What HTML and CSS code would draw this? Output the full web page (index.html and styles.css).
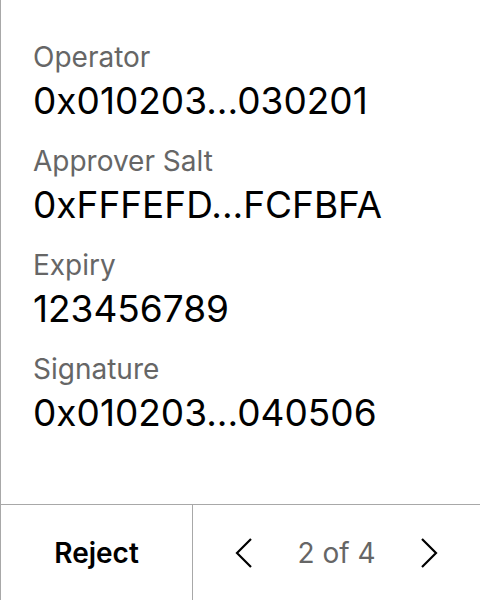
FILE: index.html
```html
<!DOCTYPE html>
<html>
<head>
<meta charset="utf-8">
<link rel="stylesheet" href="styles.css">
</head>
<body>
<div class="panel">
  <div class="fields">
    <div class="field">
      <div class="label">Operator</div>
      <div class="value">0x010203...030201</div>
    </div>
    <div class="field">
      <div class="label">Approver Salt</div>
      <div class="value">0xFFFEFD...FCFBFA</div>
    </div>
    <div class="field">
      <div class="label">Expiry</div>
      <div class="value">123456789</div>
    </div>
    <div class="field">
      <div class="label">Signature</div>
      <div class="value">0x010203...040506</div>
    </div>
  </div>
  <div class="footer">
    <div class="reject">Reject</div>
    <div class="pager">
      <svg class="chev" width="18" height="32" viewBox="0 0 18 32"><path d="M16 2 L2 16 L16 30" fill="none" stroke="#000" stroke-width="2.2"/></svg>
      <span class="count">2 of 4</span>
      <svg class="chev" width="18" height="32" viewBox="0 0 18 32"><path d="M2 2 L16 16 L2 30" fill="none" stroke="#000" stroke-width="2.2"/></svg>
    </div>
  </div>
</div>
</body>
</html>
```
FILE: styles.css
```css
html, body {
  margin: 0;
  padding: 0;
  background: #fff;
}
body {
  font-family: Inter, "Noto Sans", sans-serif;
}
.panel {
  width: 480px;
  height: 600px;
  box-sizing: border-box;
  border-left: 1px solid #a8a8a8;
  display: flex;
  flex-direction: column;
}
.fields {
  flex: 1;
  padding: 40px 0 0 32px;
  display: flex;
  flex-direction: column;
  gap: 20px;
}
.field {
  display: flex;
  flex-direction: column;
  gap: 4px;
}
.label {
  font-size: 28px;
  line-height: 34px;
  color: #666;
}
.value {
  font-size: 37px;
  line-height: 46px;
  color: #000;
}
.footer {
  height: 95px;
  border-top: 1px solid #a8a8a8;
  display: flex;
}
.reject {
  width: 191px;
  border-right: 1px solid #a8a8a8;
  display: flex;
  align-items: center;
  justify-content: center;
  font-size: 28px;
  font-weight: 600;
  color: #000;
}
.pager {
  flex: 1;
  display: flex;
  align-items: center;
  justify-content: space-between;
  padding: 0 42px 0 42px;
}
.count {
  font-size: 28px;
  color: #666;
}
```
